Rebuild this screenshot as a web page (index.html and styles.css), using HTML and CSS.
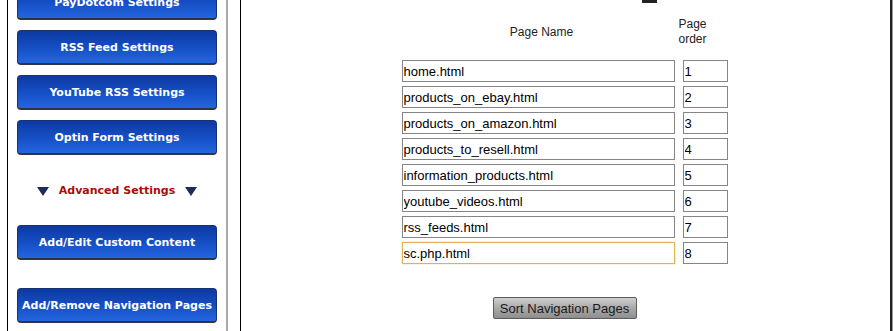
FILE: index.html
```html
<!DOCTYPE html>
<html lang="en">
<head>
  <meta charset="UTF-8">
  <meta name="viewport" content="width=device-width, initial-scale=1.0">
  <title>Add/Remove Navigation Pages</title>
  <link rel="stylesheet" href="styles.css">
</head>
<body>
  <div class="layout">
    <div class="sidebar">
      <a class="nav-btn first" href="#">PayDotcom Settings</a>
      <a class="nav-btn" href="#">RSS Feed Settings</a>
      <a class="nav-btn" href="#">YouTube RSS Settings</a>
      <a class="nav-btn" href="#">Optin Form Settings</a>
      <div class="advanced">
        <svg class="arrow" width="12" height="9" viewBox="0 0 12 9"><path d="M0 0H12L6 9Z" fill="#1c2d5c"/></svg>
        <span>Advanced Settings</span>
        <svg class="arrow" width="12" height="9" viewBox="0 0 12 9"><path d="M0 0H12L6 9Z" fill="#1c2d5c"/></svg>
      </div>
      <a class="nav-btn" href="#">Add/Edit Custom Content</a>
      <a class="nav-btn last" href="#">Add/Remove Navigation Pages</a>
    </div>

    <div class="content">
      <div class="top-mark"></div>
      <form class="sort-form">
        <div class="sort-table">
          <div class="head name-head">Page Name</div>
          <div class="head order-head">Page<br>order</div>

          <input class="page-name" type="text" value="home.html">
          <input class="page-order" type="text" value="1">
          <input class="page-name" type="text" value="products_on_ebay.html">
          <input class="page-order" type="text" value="2">
          <input class="page-name" type="text" value="products_on_amazon.html">
          <input class="page-order" type="text" value="3">
          <input class="page-name" type="text" value="products_to_resell.html">
          <input class="page-order" type="text" value="4">
          <input class="page-name" type="text" value="information_products.html">
          <input class="page-order" type="text" value="5">
          <input class="page-name" type="text" value="youtube_videos.html">
          <input class="page-order" type="text" value="6">
          <input class="page-name" type="text" value="rss_feeds.html">
          <input class="page-order" type="text" value="7">
          <input class="page-name focused" type="text" value="sc.php.html">
          <input class="page-order" type="text" value="8">
        </div>
        <div class="submit-row">
          <button class="sort-btn" type="button">Sort Navigation Pages</button>
        </div>
      </form>
    </div>
  </div>
</body>
</html>
```

FILE: styles.css
```css
body {
  margin: 0;
  background: #fff;
  font-family: "Liberation Sans", Arial, sans-serif;
  overflow: hidden;
}
.layout {
  display: flex;
  align-items: stretch;
  height: 331px;
  overflow: hidden;
}
.sidebar {
  margin-left: 7px;
  width: 209px;
  padding-left: 9px;
  border-left: 1px solid #000;
  border-right: 2px solid #a9a9a9;
  display: flex;
  flex-direction: column;
}
.nav-btn {
  display: flex;
  align-items: center;
  justify-content: center;
  flex-shrink: 0;
  width: 200px;
  height: 35px;
  box-sizing: border-box;
  margin-bottom: 10px;
  border: 1px solid #1b3272;
  border-bottom: 2px solid #2f3443;
  border-radius: 4px;
  background: linear-gradient(#0d39a2, #1650c6 55%, #2466e0);
  color: #fff;
  font-family: "DejaVu Sans", Verdana, sans-serif;
  font-size: 11px;
  font-weight: bold;
  text-decoration: none;
  white-space: nowrap;
}
.nav-btn.first {
  margin-top: -15px;
}
.advanced {
  height: 70px;
  margin-top: -10px;
  flex-shrink: 0;
  display: flex;
  align-items: center;
  justify-content: center;
  gap: 10px;
  width: 200px;
  padding-top: 1px;
  box-sizing: border-box;
  color: #a80c0c;
  font-family: "DejaVu Sans", Verdana, sans-serif;
  font-size: 11px;
  font-weight: bold;
}
.advanced .arrow {
  margin-top: 1px;
}
.nav-btn.last {
  margin-top: 18px;
}
.content {
  margin-left: 12px;
  flex: 1;
  border-left: 1px solid #000;
  border-right: 2px solid #222;
  box-shadow: 1px 0 0 #9a9a9a;
  margin-right: 1px;
}
.top-mark {
  width: 15px;
  height: 3px;
  background: #222;
  margin-left: calc(50% + 76px);
}
.sort-form {
  display: flex;
  flex-direction: column;
  align-items: center;
  padding-right: 2px;
}
.sort-table {
  display: grid;
  grid-template-columns: 273px 45px;
  column-gap: 8px;
  row-gap: 4px;
  margin-top: 11px;
}
.head {
  font-size: 12px;
  color: #222;
  line-height: 15px;
  display: flex;
  align-items: center;
  height: 32px;
  margin-top: 2px;
  margin-bottom: 8px;
}
.name-head {
  justify-content: center;
  padding-left: 7px;
}
.order-head {
  margin-left: -5px;
  width: 30px;
  text-align: center;
  justify-content: center;
}
.sort-table input {
  height: 22px;
  box-sizing: border-box;
  margin: 0;
  padding: 1px 1px 0;
  border: 1px solid #858585;
  font-family: "Liberation Sans", Arial, sans-serif;
  font-size: 13px;
  color: #000;
  background: #fff;
  outline: none;
}
.sort-table input.focused {
  border-color: #dcb25a;
  box-shadow: 0 0 2px #f2d68f;
}
.submit-row {
  margin-top: 33px;
}
.sort-btn {
  width: 144px;
  height: 22px;
  padding: 0;
  border: 1px solid #5b5b5b;
  border-radius: 2px;
  background: linear-gradient(#cfcfcf, #a9a9a9 50%, #8e8e8e);
  font-family: "Liberation Sans", Arial, sans-serif;
  font-size: 13px;
  color: #1a1a1a;
}
```
